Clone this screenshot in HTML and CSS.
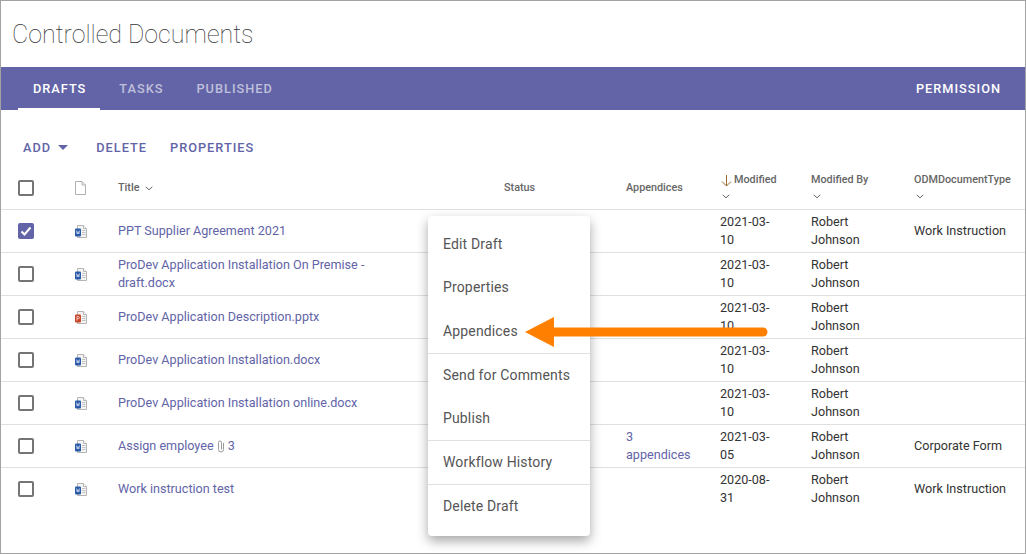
FILE: index.html
```html
<!DOCTYPE html>
<html lang="en">
<head>
<meta charset="utf-8">
<title>Controlled Documents</title>
<link rel="stylesheet" href="styles.css">
</head>
<body>
<svg class="defs" width="0" height="0">
  <symbol id="sheet" viewBox="0 0 12 13">
    <path d="M2.500 .5h6l3 3v9h-9z" fill="#f4f4f4" stroke="#b5b5b5"/>
    <path d="M8.500 .5v3h3" fill="#fff" stroke="#b5b5b5"/>
    <path d="M7 5.500h3.500M7 7.500h3.500M7 9.500h3.500" stroke="#c4c4c4"/>
  </symbol>
  <symbol id="word" viewBox="0 0 12 13">
    <use href="#sheet" width="12" height="13"/>
    <rect x="0" y="3.500" width="6" height="8" rx="1" fill="#2b5aa8"/>
    <path d="M1.500 5.500l.7 3.500.8-2.500.8 2.500.7-3.500" fill="none" stroke="#dfe8f6" stroke-width=".7"/>
  </symbol>
  <symbol id="ppt" viewBox="0 0 12 13">
    <use href="#sheet" width="12" height="13"/>
    <rect x="0" y="3.500" width="6" height="8" rx="1" fill="#c8452b"/>
    <path d="M2 9.500v-4h1.300a1 1 0 0 1 0 2.200h-1.300" fill="none" stroke="#f8e0da" stroke-width=".8"/>
  </symbol>
  <symbol id="chev" viewBox="0 0 8 5">
    <path d="M.7 .8l3.300 3 3.300-3" fill="none" stroke="#666" stroke-width="1"/>
  </symbol>
</svg>

<div class="page">
  <h1 class="page-title">Controlled Documents</h1>

  <nav class="band">
    <a class="tab tab-on">DRAFTS</a>
    <a class="tab">TASKS</a>
    <a class="tab">PUBLISHED</a>
    <a class="tab tab-right">PERMISSION</a>
  </nav>

  <div class="toolbar">
    <a class="tool">ADD <i class="caret"></i></a>
    <a class="tool">DELETE</a>
    <a class="tool">PROPERTIES</a>
  </div>

  <table class="docs">
    <colgroup>
      <col class="c-check"><col class="c-icon"><col class="c-title"><col class="c-status">
      <col class="c-app"><col class="c-mod"><col class="c-by"><col>
    </colgroup>
    <thead>
      <tr>
        <th><span class="check"></span></th>
        <th><svg class="doc-head" width="11" height="14" viewBox="0 0 11 14"><path d="M.5 .5h6.500l3.500 3.500v9.500h-10z" fill="#fff" stroke="#b0b0b0"/><path d="M7 .5v3.500h3.500" fill="none" stroke="#b0b0b0"/></svg></th>
        <th>Title <svg class="chev-in" width="8" height="5"><use href="#chev"/></svg></th>
        <th>Status</th>
        <th>Appendices</th>
        <th class="two">
          <svg class="sort" width="13" height="13" viewBox="0 0 13 13"><path d="M6.500 1v11M2 7.500l4.500 4.500 4.500-4.500" fill="none" stroke="#9a6b2f"/></svg>Modified
          <svg class="chev" width="8" height="5"><use href="#chev"/></svg>
        </th>
        <th class="two">Modified By <svg class="chev" width="8" height="5"><use href="#chev"/></svg></th>
        <th class="two">ODMDocumentType <svg class="chev" width="8" height="5"><use href="#chev"/></svg></th>
      </tr>
    </thead>
    <tbody>
      <tr>
        <td><span class="check check-on"><svg width="12" height="12" viewBox="0 0 12 12"><path d="M1.500 6.500l3 3 6-7" fill="none" stroke="#fff" stroke-width="2"/></svg></span></td>
        <td><svg class="ficon" width="12" height="13"><use href="#word"/></svg></td>
        <td class="name"><a class="link">PPT Supplier Agreement 2021</a></td>
        <td></td><td></td>
        <td class="narrow">2021-03-10</td>
        <td class="narrow">Robert Johnson</td>
        <td>Work Instruction</td>
      </tr>
      <tr>
        <td><span class="check"></span></td>
        <td><svg class="ficon" width="12" height="13"><use href="#word"/></svg></td>
        <td class="name"><a class="link">ProDev Application Installation On Premise - draft.docx</a></td>
        <td></td><td></td>
        <td class="narrow">2021-03-10</td>
        <td class="narrow">Robert Johnson</td>
        <td></td>
      </tr>
      <tr>
        <td><span class="check"></span></td>
        <td><svg class="ficon" width="12" height="13"><use href="#ppt"/></svg></td>
        <td class="name"><a class="link">ProDev Application Description.pptx</a></td>
        <td></td><td></td>
        <td class="narrow">2021-03-10</td>
        <td class="narrow">Robert Johnson</td>
        <td></td>
      </tr>
      <tr>
        <td><span class="check"></span></td>
        <td><svg class="ficon" width="12" height="13"><use href="#word"/></svg></td>
        <td class="name"><a class="link">ProDev Application Installation.docx</a></td>
        <td></td><td></td>
        <td class="narrow">2021-03-10</td>
        <td class="narrow">Robert Johnson</td>
        <td></td>
      </tr>
      <tr>
        <td><span class="check"></span></td>
        <td><svg class="ficon" width="12" height="13"><use href="#word"/></svg></td>
        <td class="name"><a class="link">ProDev Application Installation online.docx</a></td>
        <td></td><td></td>
        <td class="narrow">2021-03-10</td>
        <td class="narrow">Robert Johnson</td>
        <td></td>
      </tr>
      <tr>
        <td><span class="check"></span></td>
        <td><svg class="ficon" width="12" height="13"><use href="#word"/></svg></td>
        <td class="name"><a class="link">Assign employee <svg class="clip" width="8" height="13" viewBox="0 0 8 13"><path d="M6.500 3v6.500a2.500 2.500 0 0 1-5 0V2.500a1.500 1.500 0 0 1 3 0v7" fill="none" stroke="#999"/></svg> 3</a></td>
        <td></td>
        <td class="narrow"><a class="link">3 appendices</a></td>
        <td class="narrow">2021-03-05</td>
        <td class="narrow">Robert Johnson</td>
        <td>Corporate Form</td>
      </tr>
      <tr>
        <td><span class="check"></span></td>
        <td><svg class="ficon" width="12" height="13"><use href="#word"/></svg></td>
        <td class="name"><a class="link">Work instruction test</a></td>
        <td></td><td></td>
        <td class="narrow">2020-08-31</td>
        <td class="narrow">Robert Johnson</td>
        <td>Work Instruction</td>
      </tr>
    </tbody>
  </table>

  <ul class="menu">
    <li>Edit Draft</li>
    <li>Properties</li>
    <li>Appendices</li>
    <li class="sep">Send for Comments</li>
    <li>Publish</li>
    <li class="sep">Workflow History</li>
    <li class="sep">Delete Draft</li>
  </ul>

  <svg class="callout" width="250" height="34" viewBox="0 0 250 34">
    <path d="M29 17H238" stroke="#ff8000" stroke-width="9" stroke-linecap="round"/>
    <path d="M0 17L29 2V32z" fill="#ff8000"/>
  </svg>
</div>
</body>
</html>
```

FILE: styles.css
```css
html, body {
  margin: 0;
  background: #fff;
}
body {
  color: #333;
  font: 12.6px/18px Roboto, "Liberation Sans", sans-serif;
}
.defs {
  position: absolute;
}
.page {
  position: relative;
  box-sizing: border-box;
  height: 554px;
  border: 1px solid #a3a3a3;
  overflow: hidden;
}
.page-title {
  box-sizing: border-box;
  height: 66px;
  margin: 0;
  padding: 19px 11px 0;
  color: #333;
  font-size: 25px;
  font-weight: 100;
  line-height: 30px;
}

.band {
  display: flex;
  height: 43px;
  padding-left: 17px;
  background: #6264a7;
  font-size: 12.75px;
}
.tab {
  margin-right: 4px;
  padding: 0 14px 0 15px;
  color: rgba(255, 255, 255, .6);
  font-weight: 500;
  letter-spacing: 1px;
  line-height: 43px;
}
.tab-on {
  color: #fff;
  border-bottom: 2px solid #fff;
  height: 41px;
}
.tab-right {
  margin: 0 10px 0 auto;
  color: #fff;
}

.toolbar {
  display: flex;
  gap: 23px;
  height: 56px;
  padding: 29px 0 0 22px;
  box-sizing: border-box;
  font-size: 12.75px;
}
.tool {
  color: #6264a7;
  font-weight: 500;
  letter-spacing: 1px;
}
.caret {
  display: inline-block;
  margin: 0 5px 2px 3px;
  border: 5px solid transparent;
  border-top-color: #6264a7;
  border-bottom: 0;
  vertical-align: middle;
}

.docs {
  width: 100%;
  table-layout: fixed;
  border-collapse: collapse;
}
.c-check { width: 64px; }
.c-icon { width: 45px; }
.c-title { width: 386px; }
.c-status { width: 122px; }
.c-app { width: 94px; }
.c-mod { width: 91px; }
.c-by { width: 103px; }
.docs th, .docs td {
  padding: 0 0 0 8px;
  border-bottom: 1px solid #e0e0e0;
  vertical-align: middle;
  text-align: left;
}
.docs th {
  height: 43px;
  color: #666;
  font-size: 10.8px;
  font-weight: 500;
}
.docs td {
  height: 42px;
}
.docs tbody tr:last-child td {
  border-bottom: 0;
}
.docs th:first-child, .docs td:first-child {
  padding-left: 17px;
}
.docs th.two {
  height: 38px;
  padding-top: 5px;
  vertical-align: top;
}
.docs td.narrow {
  padding-right: 24px;
}
.docs td.name {
  padding-right: 120px;
}
.chev {
  display: block;
  margin: 5px 0 0 2px;
}
.chev-in {
  margin-left: 3px;
}
.sort {
  margin-right: 1px;
  vertical-align: -4px;
}
.doc-head {
  display: block;
  margin-left: 2px;
}
.ficon {
  display: block;
  margin: 1px 0 0 2px;
}
.clip {
  vertical-align: -3px;
}
.link {
  color: #6264a7;
}
.check {
  display: block;
  box-sizing: border-box;
  width: 16px;
  height: 16px;
  border: 2px solid #757575;
  border-radius: 2px;
}
.check svg {
  display: block;
}
.check-on {
  border-color: #6264a7;
  background: #6264a7;
}

.menu {
  position: absolute;
  top: 215px;
  left: 427px;
  box-sizing: border-box;
  width: 162px;
  height: 320px;
  margin: 0;
  padding: 6.5px 0 7px;
  border-radius: 4px;
  background: #fff;
  box-shadow: 0 5px 12px rgba(0, 0, 0, .35);
  list-style: none;
  color: #555;
  font-size: 14px;
  letter-spacing: .15px;
}
.menu li {
  height: 43.7px;
  padding-left: 15px;
  line-height: 43.7px;
}
.menu .sep {
  box-shadow: 0 -1px 0 #e0e0e0;
}
.callout {
  position: absolute;
  top: 314px;
  left: 524px;
}
```
